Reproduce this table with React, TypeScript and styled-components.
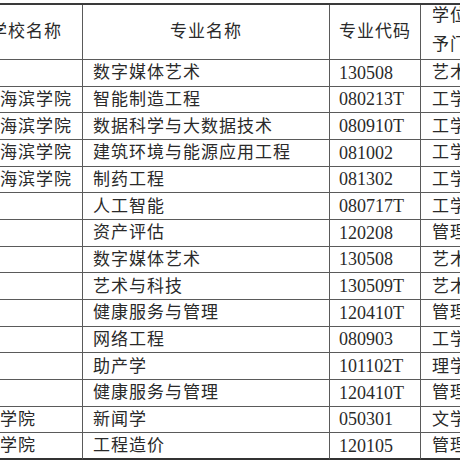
import React from "react";
import styled, { createGlobalStyle } from "styled-components";

const Global = createGlobalStyle`
  html, body {
    margin: 0;
    padding: 0;
    background: #ffffff;
    overflow: hidden;
  }
  body {
    width: 460px;
    height: 460px;
  }
`;

const Page = styled.div`
  width: 460px;
  height: 460px;
  overflow: hidden;
  padding-top: 3px;
  box-sizing: border-box;
  background: #fff;
`;

const Grid = styled.div`
  display: grid;
  margin-left: -109px;
  width: 690px;
  grid-template-columns: 192px 247px 91px 160px;
  grid-template-rows: 55px repeat(15, 26.667px);
  border-top: 2px solid #3a3a3a;
  font-family: "Liberation Serif", "Noto Sans CJK SC", serif;
  color: #2a2a2a;
`;

const Cell = styled.div<{ $align?: "left" | "center" | "right"; $last?: boolean; $code?: boolean; $pad?: number }>`
  box-sizing: border-box;
  display: flex;
  align-items: center;
  justify-content: ${(p) =>
    p.$align === "center" ? "center" : p.$align === "right" ? "flex-end" : "flex-start"};
  padding: 0 ${(p) => (p.$align === "right" ? `${p.$pad ?? 10}px` : "0")} 0
    ${(p) => (p.$align === "right" ? "0" : `${p.$pad ?? 10}px`)};
  border-right: 1px solid #5a5a5a;
  border-bottom: ${(p) => (p.$last ? "2px solid #333" : "1px solid #5a5a5a")};
  white-space: nowrap;
  overflow: hidden;
  font-size: ${(p) => (p.$code ? "18px" : "17px")};
  letter-spacing: ${(p) => (p.$code ? "0" : "1px")};
  line-height: 1;
`;

const HeadCell = styled(Cell)`
  padding-bottom: 2px;
`;

const StackedHead = styled.div`
  display: flex;
  flex-direction: column;
  line-height: 29px;
  margin-top: -3px;
`;

type Row = [string, string, string, string];

const rows: Row[] = [
  ["", "数字媒体艺术", "130508", "艺术学"],
  ["北京交通大学海滨学院", "智能制造工程", "080213T", "工学"],
  ["北京交通大学海滨学院", "数据科学与大数据技术", "080910T", "工学"],
  ["北京交通大学海滨学院", "建筑环境与能源应用工程", "081002", "工学"],
  ["北京交通大学海滨学院", "制药工程", "081302", "工学"],
  ["", "人工智能", "080717T", "工学"],
  ["", "资产评估", "120208", "管理学"],
  ["", "数字媒体艺术", "130508", "艺术学"],
  ["", "艺术与科技", "130509T", "艺术学"],
  ["", "健康服务与管理", "120410T", "管理学"],
  ["", "网络工程", "080903", "工学"],
  ["", "助产学", "101102T", "理学"],
  ["", "健康服务与管理", "120410T", "管理学"],
  ["河北工程技术学院", "新闻学", "050301", "文学"],
  ["河北工程技术学院", "工程造价", "120105", "管理学"],
];

export default function App() {
  return (
    <>
      <Global />
      <Page>
        <Grid>
          <HeadCell $align="right" $pad={20}>学校名称</HeadCell>
          <HeadCell $align="center" $pad={0}>专业名称</HeadCell>
          <HeadCell $align="center" $pad={0}>专业代码</HeadCell>
          <HeadCell $pad={11}>
            <StackedHead>
              <span>学位授</span>
              <span>予门类</span>
            </StackedHead>
          </HeadCell>
          {rows.map((r, i) => {
            const last = i === rows.length - 1;
            return (
              <React.Fragment key={i}>
                <Cell $pad={1} $last={last}>{r[0]}</Cell>
                <Cell $pad={10} $last={last}>{r[1]}</Cell>
                <Cell $pad={9} $code $last={last}>{r[2]}</Cell>
                <Cell $pad={11} $last={last}>{r[3]}</Cell>
              </React.Fragment>
            );
          })}
        </Grid>
      </Page>
    </>
  );
}
